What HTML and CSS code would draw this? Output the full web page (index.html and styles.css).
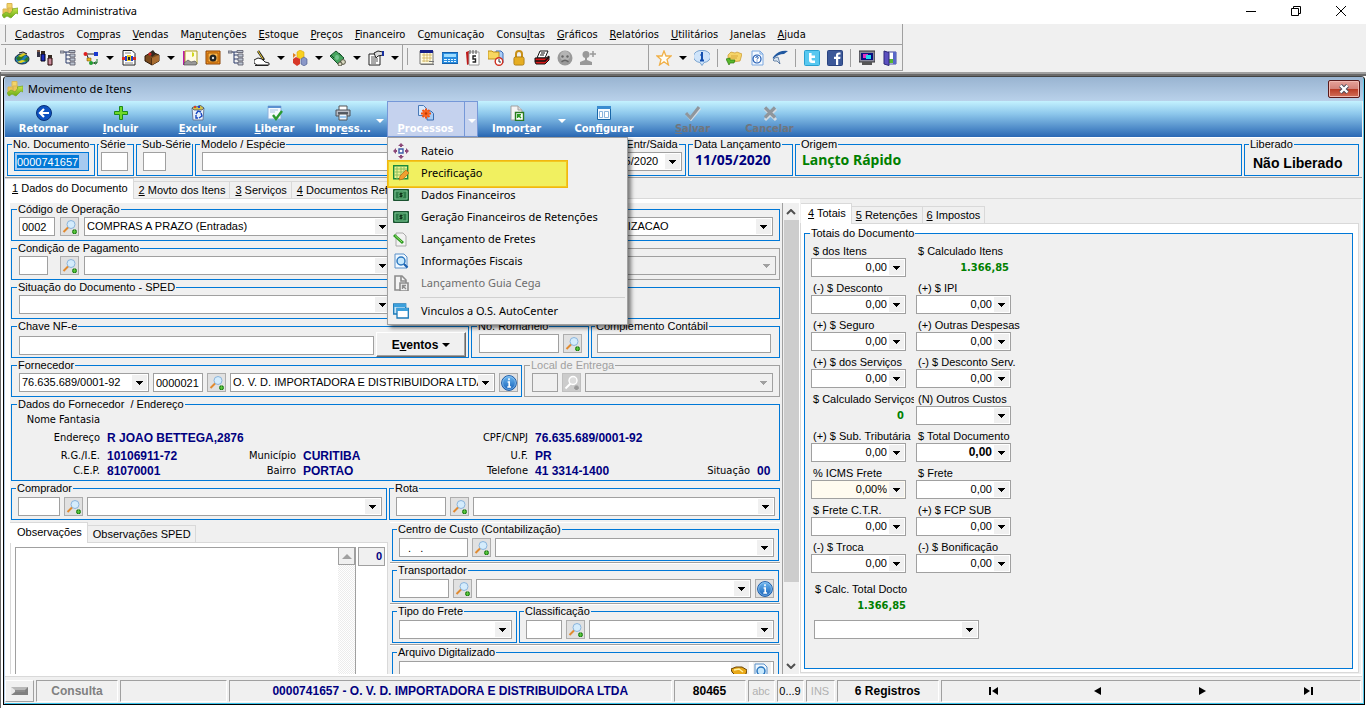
FILE: index.html
```html
<!DOCTYPE html>
<html lang="pt-BR">
<head>
<meta charset="utf-8">
<title>Gestão Administrativa</title>
<link rel="stylesheet" href="styles.css">
</head>
<body>
<svg class="defs" aria-hidden="true">
  <defs>
    <linearGradient id="lgBlue" x1="0" y1="0" x2="0" y2="1"><stop offset="0" stop-color="#6db8f0"/><stop offset="1" stop-color="#1560b8"/></linearGradient>
    <linearGradient id="lgGreen" x1="0" y1="0" x2="0" y2="1"><stop offset="0" stop-color="#c8e84a"/><stop offset="1" stop-color="#6aaa14"/></linearGradient>
  </defs>
  <symbol id="app" viewBox="0 0 16 16"><path d="M5 .5h5v5H5z" fill="#f3d469" stroke="#d9b654"/><path d="M1 6h5v5H1zM6 5h5v6H6z" fill="#ecc557" stroke="#d9b654"/><path d="M0 12l4-3 4 2 3-4-1-1 6-1v6l-2-1-5 5-4-2-3 2z" fill="url(#lgGreen)" stroke="#7aaa2a" stroke-width=".8"/></symbol>
  <symbol id="globe" viewBox="0 0 16 16"><ellipse cx="8" cy="9" rx="7" ry="5" fill="#1c7ac0" stroke="#123"/><path d="M2 8l5-4 4 1-3 4-4 2zM9 11l4-4 2 1-2 4z" fill="#2c7a28"/><path d="M4 6l6-3 3 1-6 3z" fill="#d8c820"/><path d="M3 12l5-2 4 1-5 2z" fill="#e8d820"/><path d="M5 3l4-1 4 2" fill="none" stroke="#111"/></symbol>
  <symbol id="people" viewBox="0 0 16 16"><path d="M0 1h3v6H0z" fill="#334"/><path d="M0 0h3v2H0z" fill="#754"/><path d="M4 4h4v7H4z" fill="#1c2cc0" stroke="#001"/><path d="M4 1h4v3H4z" fill="#332820"/><path d="M11 8h4v7h-4z" fill="#c88c9c" stroke="#200"/><path d="M11 5h4v3h-4z" fill="#332820"/></symbol>
  <symbol id="tree" viewBox="0 0 16 16"><path d="M3 2h6M6 2v11M6 5h4M6 9h4M6 13h4" fill="none" stroke="#2a3a6a"/><path d="M0 1h4v2H0zM9 .5h6v2H9zM10 4h5v3h-5zM10 8h5v3h-5zM10 12h5v3h-5z" fill="#bcc4d0" stroke="#556" stroke-width=".8"/></symbol>
  <symbol id="flow" viewBox="0 0 16 16"><path d="M3 4h10M4 5l2 5M9 13h5" stroke="#222" fill="none"/><circle cx="2.500" cy="4" r="2" fill="#e02020"/><path d="M11 2h4v4h-4z" fill="#1838d0"/><path d="M4 8h4v3H4z" fill="#e8b820" stroke="#640" stroke-width=".5"/><circle cx="8" cy="13" r="2" fill="#20a030"/><path d="M14 9v4h-3M12.500 11.500L11 13l1.500 1.500" fill="none" stroke="#187828"/></symbol>
  <symbol id="docperson" viewBox="0 0 16 16"><path d="M2 .5h9l3 3V15H2z" fill="#fff" stroke="#222"/><path d="M4 3h6M4 13h8" stroke="#888"/><path d="M1 7h3v3H1zM12 7h3v3h-3z" fill="#e03020"/><path d="M4 6h8v5H4z" fill="#2040d0"/><path d="M6 5h4v6H6z" fill="#f0d020"/><path d="M7 7h2v3H7z" fill="#222"/></symbol>
  <symbol id="box" viewBox="0 0 16 16"><path d="M1 6l7-4 7 3v6l-7 4-7-4z" fill="#7a4a1c" stroke="#2a1606"/><path d="M8 8v7" stroke="#2a1606"/><path d="M8 8l7-3v6l-7 4z" fill="#a86c30"/><path d="M5 3l4-3 3 4-4 3z" fill="#332a20"/><circle cx="6" cy="4" r="1.600" fill="#d02020"/></symbol>
  <symbol id="scroll" viewBox="0 0 16 16"><path d="M1 1h3v14H1z" fill="#c018b0"/><path d="M3 1h12v13H3z" fill="#fffbe4" stroke="#b0a020"/><path d="M2 13l4-3 3 2 4-1 2 2-1 2H2z" fill="#999" stroke="#444" stroke-width=".6"/><path d="M10 2l2 1v3l-2 1z" fill="#d0d820"/></symbol>
  <symbol id="safe" viewBox="0 0 16 16"><path d="M1 1h14v13H1z" fill="#f0901c" stroke="#8a4204"/><path d="M3 3h10v9H3z" fill="#ffb84c" stroke="#a85a08"/><circle cx="8" cy="8" r="3.500" fill="#222"/><circle cx="8" cy="8" r="1.200" fill="#ddd"/></symbol>
  <symbol id="hand" viewBox="0 0 16 16"><path d="M0 10l4-2 4 1 3 3 4 1v2H3l-3-2z" fill="#fff" stroke="#222"/><path d="M4 1l6 9" stroke="#222" stroke-width="2.400"/><path d="M4 1l5 8" stroke="#f0d030"/><path d="M1 15.500h13" stroke="#222"/></symbol>
  <symbol id="shapes" viewBox="0 0 16 16"><path d="M8 0l4 2v5L8 9 5 7V2z" fill="#f8d020" stroke="#d8a408" stroke-width=".6"/><path d="M1 9l3-2 4 2v5l-3 2-4-3z" fill="#d83828"/><path d="M9 9l3-2 3 2v5l-3 2-3-2z" fill="#8a98c8" stroke="#405088" stroke-width=".6"/><path d="M1 3l3 2-3 3z" fill="#e08020"/></symbol>
  <symbol id="money" viewBox="0 0 16 16"><path d="M0 6l6-5 8 7-6 6z" fill="#46a45e" stroke="#14502a"/><ellipse cx="7" cy="7.500" rx="2" ry="2.400" fill="#74c48e"/><path d="M1 5l3 3M9 3l3 3" stroke="#14502a"/><circle cx="13" cy="12" r="2.400" fill="#d8d8c0" stroke="#554"/><circle cx="10" cy="14" r="2" fill="#d8d8c0" stroke="#554"/></symbol>
  <symbol id="form" viewBox="0 0 16 16"><path d="M1 4h11v11H1z" fill="#fff" stroke="#222"/><path d="M3 7h4M3 9h7M3 11h7M3 13h5" stroke="#555"/><path d="M6 3l4-2 5 1v3l-5 1-2 2z" fill="#ddd" stroke="#222"/><path d="M14 1h2v5h-2z" fill="#1830a0"/></symbol>
  <symbol id="calendar" viewBox="0 0 16 16"><path d="M1 1h13v13H1z" fill="#fffce4" stroke="#777"/><path d="M1 0h13v3H1z" fill="#16208a"/><path d="M3 5h10M3 8h10M3 11h7M5 3v9M8 3v9M11 3v9" stroke="#c8a848" stroke-width=".7"/><path d="M10 11h5v1h-5zM2 14h13v1H2z" fill="#777"/></symbol>
  <symbol id="calc" viewBox="0 0 16 16"><path d="M0 2.500h16v11H0z" fill="#2a8ee0" stroke="#1460ac"/><path d="M2 4h12v3H2z" fill="#9edcff"/><path d="M2 9h3v1H2zM6 9h2v1H6zM9 9h2v1H9zM12 9h2v1h-2zM2 11h3v1H2zM6 11h2v1H6zM9 11h2v1H9zM12 11h2v1h-2z" fill="#e8f6ff"/></symbol>
  <symbol id="notebook" viewBox="0 0 16 16"><path d="M1 2l3-1v13l-2 1z" fill="#c01818"/><path d="M4 2h10v13H4z" fill="#fff" stroke="#999"/><path d="M5 0v4M8 0v4M11 0v4" stroke="#555"/><path d="M11 6H8v3h2.500v3H7.500" fill="none" stroke="#222" stroke-width="1.400"/></symbol>
  <symbol id="foldclock" viewBox="0 0 16 16"><path d="M8 1h5l2 2v10H8z" fill="#aacdf8" stroke="#3a6cb8"/><path d="M0 1h4l1 1h6v7H0z" fill="#f8d860" stroke="#c09018"/><circle cx="11" cy="11.500" r="3.800" fill="#fff" stroke="#d03020" stroke-width="1.400"/><path d="M11 9v3h2" fill="none" stroke="#333"/></symbol>
  <symbol id="lock" viewBox="0 0 16 16"><path d="M5 8V4a3 3 0 016 0v4" fill="none" stroke="#c89018" stroke-width="2"/><rect x="3" y="7" width="10" height="8" rx="1.500" fill="#f4c030" stroke="#a87408"/><path d="M4 9h8M4 11h8M4 13h8" stroke="#d89a14"/></symbol>
  <symbol id="stamp" viewBox="0 0 16 16"><path d="M6 1h8l-3 7H3z" fill="#fff" stroke="#111"/><path d="M7 3h4M6 5h4" stroke="#111"/><path d="M1 8h11l3-2v4l-4 4H2l-1-2z" fill="#d81818" stroke="#111"/><path d="M1 11h10l4-4" fill="none" stroke="#111" stroke-width="1.500"/></symbol>
  <symbol id="sad" viewBox="0 0 16 16"><circle cx="8" cy="8" r="7.500" fill="#9a9a9a"/><circle cx="8" cy="6" r="5" fill="#b4b4b4"/><path d="M4.500 12q3.500-3.500 7 0" fill="none" stroke="#666" stroke-width="1.300"/><circle cx="5.500" cy="6.500" r="1.200" fill="#666"/><circle cx="10.500" cy="6.500" r="1.200" fill="#666"/></symbol>
  <symbol id="useradd" viewBox="0 0 16 16"><circle cx="6" cy="4.500" r="3.500" fill="#999"/><path d="M5 7h2v3l5 2v3H0v-3l5-2z" fill="#999"/><path d="M13 1v6M10 4h6" stroke="#999" stroke-width="1.500"/></symbol>
  <symbol id="star" viewBox="0 0 16 16"><path d="M8 1l2 5h5l-4 3.500L12.500 15 8 11.800 3.500 15 5 9.500 1 6h5z" fill="#fffdf4" stroke="#f0b048" stroke-width="1.300"/></symbol>
  <symbol id="infoball" viewBox="0 0 16 16"><path d="M8 .5a7.500 6 0 012 12L8 15.500l-2-3A7.500 6 0 018 .500z" fill="#cfe4fa" stroke="#7aa4d0"/><path d="M8 2v2M6.500 5H8v5M6 10.500h4" fill="none" stroke="#1450b0" stroke-width="2"/></symbol>
  <symbol id="cards" viewBox="0 0 16 16"><path d="M2 5l3-3 4 1 2-1 5 2-2 7-8 1-4-3z" fill="#f6d468" stroke="#c8962c" stroke-width=".7"/><path d="M5 6h7M4 8h7" stroke="#d8a83c"/><path d="M0 9l4-1v2h5l-1 3H4l-1 2z" fill="#58b82c" stroke="#2c7a10" stroke-width=".7"/></symbol>
  <symbol id="dochelp" viewBox="0 0 16 16"><path d="M3 1h8l3 3v11H3z" fill="#f2f8ff" stroke="#7aa8e0"/><path d="M11 1v3h3" fill="none" stroke="#7aa8e0"/><circle cx="8" cy="9" r="4" fill="#fff" stroke="#1c58b0" stroke-width="1.200"/><path d="M6.800 8q0-1.500 1.300-1.500T9.200 8L8 9.500M8 10.500v1" fill="none" stroke="#1c58b0"/></symbol>
  <symbol id="bird" viewBox="0 0 16 16"><path d="M16 1Q7 0 2 6q-2 2-1 3 5-5 11-5z" fill="#2058a0"/><path d="M1 10q2-3 5-3l2 7-3-3-3 0z" fill="#d8e4f0" stroke="#4a6c98" stroke-width=".8"/></symbol>
  <symbol id="tw" viewBox="0 0 16 16"><rect x=".5" y=".5" width="15" height="15" rx="1" fill="#58c8f0" stroke="#28a0d0"/><path d="M5 3v7q0 3 3 3h3v-2.400H8.600Q7.600 10.600 7.600 9V8H11V5.600H7.600V3z" fill="#fff"/></symbol>
  <symbol id="fb" viewBox="0 0 16 16"><rect x=".5" y=".5" width="15" height="15" rx="1" fill="#3c5898" stroke="#2a4480"/><path d="M9 15V9H7V6.800h2V5q0-2.600 3-2.600h1.500v2.200H12Q11.200 4.600 11.200 5.600v1.200h2.300L13.200 9h-2v6z" fill="#fff"/></symbol>
  <symbol id="monitor" viewBox="0 0 16 16"><path d="M0 1h16v11H0z" fill="#8a8a9a" stroke="#333"/><path d="M2 3h12v7H2z" fill="#0a1080"/><path d="M4 4h5v4H4z" fill="#e030c0"/><path d="M7 5h5v4H7z" fill="#20d8f0"/><path d="M3 12h10v3H3z" fill="#555"/></symbol>
  <symbol id="door" viewBox="0 0 16 16"><path d="M6 2h8v12H6z" fill="#fff" stroke="#4048a0"/><path d="M7 9h6v4H7z" fill="#58b830"/><path d="M11 2h3v12h-3z" fill="#5868c8"/><path d="M2 1l5 1.500v13L2 14z" fill="#5c50c0" stroke="#2c2878"/></symbol>
  <symbol id="back" viewBox="0 0 16 16"><circle cx="8" cy="8" r="7.500" fill="#0c50c0" stroke="#083078"/><path d="M8 4L4 8l4 4M4.500 8H13" fill="none" stroke="#fff" stroke-width="2.200"/></symbol>
  <symbol id="plus" viewBox="0 0 16 16"><path d="M6.500 1.500h3v5h5v3h-5v5h-3v-5h-5v-3h5z" fill="#70d828" stroke="#1c8a1c"/></symbol>
  <symbol id="trash" viewBox="0 0 16 16"><path d="M2 3h12l-1 12H3z" fill="#e8f0fa" stroke="#6a7a98"/><path d="M2 3l3-2 2 1 3-2 4 3-2 2H4z" fill="#d0c050" stroke="#346" stroke-width=".7"/><path d="M4 1h2v2H4z" fill="#e04020"/><path d="M8 1h2v2H8z" fill="#2040d0"/><path d="M6 9l2-3 3 1M11 8l1 3-3 2M8 13H6V10" fill="none" stroke="#1848c0" stroke-width="1.400"/></symbol>
  <symbol id="docok" viewBox="0 0 16 16"><path d="M1 1h13v13H1z" fill="#f4f9ff" stroke="#8ab0dc"/><path d="M1 1h13v2H1z" fill="#5a90d0"/><path d="M3 5h8M3 7h5" stroke="#a8c4e4"/><path d="M6 10l3 4 6-8" fill="none" stroke="#2a9a30" stroke-width="2.400"/></symbol>
  <symbol id="printer" viewBox="0 0 16 16"><path d="M4 1h8v5H4z" fill="#fff" stroke="#555"/><path d="M1 5h14v6H1z" fill="#b8bcc4" stroke="#4c5058"/><path d="M3 7h10v2H3z" fill="#555b66"/><path d="M4 9h8v6H4z" fill="#eef6ff" stroke="#555"/><path d="M5 12h6" stroke="#4a9ae0"/></symbol>
  <symbol id="process" viewBox="0 0 16 16"><path d="M.5.500h5l3 3v7h-8z" fill="#d8e8fc" stroke="#4a7ab8"/><path d="M9 6h4l2.500 2.500V15H9z" fill="#a8ccf4" stroke="#3a6cb0"/><path d="M8 3.500v10M3 8.500h10M4.500 5l7 7M11.500 5l-7 7" stroke="#f05010" stroke-width="2"/><circle cx="8" cy="8.500" r="3.400" fill="#f86420"/><circle cx="8" cy="8.500" r="1.200" fill="#c03800"/></symbol>
  <symbol id="import" viewBox="0 0 16 16"><path d="M2 1h7l4 4v10H2z" fill="#f4f4f4" stroke="#a0a0a0"/><path d="M9 1v4h4" fill="#ddd" stroke="#a0a0a0"/><path d="M6.500 7.500h8v8h-8z" fill="#fff" stroke="#2c7a20" stroke-width="1.400"/><path d="M12 13L9 10M8.600 13V9.700H12" fill="none" stroke="#2c9a20" stroke-width="1.500"/></symbol>
  <symbol id="config" viewBox="0 0 16 16"><path d="M1.500 1.500h13v13h-13z" fill="#f4faff" stroke="#1866a8"/><path d="M1 1h14v3H1z" fill="#3a8cd0"/><path d="M3.500 6.500h3v6h-3zM8.500 6.500h4v6h-4z" fill="#fff" stroke="#8ab4dc"/></symbol>
  <symbol id="check" viewBox="0 0 16 16"><path d="M2 9l4 5L15 3" fill="none" stroke="#d4dce4" stroke-width="3" /><path d="M1 8l4.500 5L14 2" fill="none" stroke="#8f969c" stroke-width="3"/></symbol>
  <symbol id="cross" viewBox="0 0 16 16"><path d="M3 4l11 11M14 4L3 15" fill="none" stroke="#d4dce4" stroke-width="3"/><path d="M3 2.500l10 10M13 2.500l-10 10" fill="none" stroke="#8f969c" stroke-width="3.200"/></symbol>
  <symbol id="find" viewBox="0 0 16 16"><circle cx="9" cy="5.500" r="4" fill="#d4ecfc" stroke="#8ab4dc"/><path d="M6 8.500L1.500 13" stroke="#e08a30" stroke-width="2"/><path d="M12.500 10.500v4.600M10.200 12.800h4.600" stroke="#1c7a14" stroke-width="3"/><path d="M12.500 11v3.600M10.700 12.800h3.600" stroke="#5ac83c" stroke-width="1.200"/></symbol>
  <symbol id="findoff" viewBox="0 0 16 16"><circle cx="9" cy="5.500" r="4" fill="#ddd" stroke="#fff" stroke-width="1.400"/><path d="M6.500 8.500L1.500 13.500" stroke="#fff" stroke-width="2"/><path d="M12.500 10.500v4.600M10.200 12.800h4.600" stroke="#999" stroke-width="2.500"/></symbol>
  <symbol id="info" viewBox="0 0 16 16"><circle cx="8" cy="8" r="7.400" fill="url(#lgBlue)" stroke="#1c5ca8"/><circle cx="8" cy="8" r="6.400" fill="none" stroke="#a8d4f8" stroke-width=".6"/><path d="M8 3.200v2M6.600 7H8.200v5M6.300 12h3.800" fill="none" stroke="#fff" stroke-width="1.600"/></symbol>
  <symbol id="rateio" viewBox="0 0 16 16"><path d="M6 6h4v4H6z" fill="#fff" stroke="#3c5ca8" stroke-width="1.400"/><path d="M8 0l3 3H9v1H7V3H5zM8 16l3-3H9v-1H7v1H5zM0 8l3-3v2h1v2H3v2zM16 8l-3-3v2h-1v2h1v2z" fill="#8c4878"/></symbol>
  <symbol id="gridpen" viewBox="0 0 16 16"><path d="M.7.700h14v13H.7z" fill="#f0f290" stroke="#1c8a3c" stroke-width="1.400"/><path d="M1 4h13M1 7h13M1 10h13M4 1v13M8 1v13M11 1v13" stroke="#8cc05c"/><path d="M6 15l1-4 6-6 3 3-6 6z" fill="#f0a030" stroke="#b86a10" stroke-width=".7"/></symbol>
  <symbol id="bill" viewBox="0 0 16 16"><path d="M.5 2.500h15v11H.5z" fill="#2c7a48" stroke="#1a5230"/><path d="M2 4h12v8H2z" fill="none" stroke="#7cc494"/><ellipse cx="8" cy="8" rx="3" ry="3.400" fill="#4c9c64"/><path d="M9.500 6.500H7v1.500h2v1.500H6.500M8 5.500v5" fill="none" stroke="#0c3018"/></symbol>
  <symbol id="docpen" viewBox="0 0 16 16"><path d="M3 2h7l3 3v10H3z" fill="#f2f2f2" stroke="#aaa"/><path d="M1 4l9 8" stroke="#2c9a20" stroke-width="3"/><path d="M2 4.500l7 6.500" stroke="#98e070"/></symbol>
  <symbol id="docfind" viewBox="0 0 16 16"><path d="M2 1h9l3 3v11H2z" fill="#f0f8ff" stroke="#5a90c8"/><circle cx="8" cy="8" r="4" fill="#c8e8fc" stroke="#2c78c0" stroke-width="1.500"/><path d="M11 11l3.500 3.500" stroke="#1c60b0" stroke-width="2.200"/></symbol>
  <symbol id="importoff" viewBox="0 0 16 16"><path d="M2 1h7l4 4v10H2z" fill="#f4f4f4" stroke="#8c8c8c" stroke-width="1.600"/><path d="M8 1v5h5" fill="none" stroke="#8c8c8c" stroke-width="1.600"/><path d="M7 8h8v8H7z" fill="#eee" stroke="#8c8c8c" stroke-width="1.600"/><path d="M13 14l-3-3M9.500 14v-3.500H13" fill="none" stroke="#8c8c8c" stroke-width="1.300"/></symbol>
  <symbol id="windows" viewBox="0 0 16 16"><path d="M.7 1h12v10H.7z" fill="#c4e6fa" stroke="#1c7ab8" stroke-width="1.300"/><path d="M1 1h12v3H1z" fill="#3ca0dc"/><path d="M4 5.500h11.300v9.500H4z" fill="#fff" stroke="#1c7ab8" stroke-width="1.300"/><path d="M4 5h11v3H4z" fill="#3ca0dc"/></symbol>
  <symbol id="handshake" viewBox="0 0 16 16"><path d="M0 6l5-2 6 0 5 3-1 4-5 3-6-2-3-3z" fill="#e8a818" stroke="#6a4404"/><path d="M3 7l5-1 4 3" fill="none" stroke="#fff0a0" stroke-width="1.400"/></symbol>
  <symbol id="key" viewBox="0 0 18 10"><path d="M0 1h17v8H0z" fill="#808080"/><path d="M0 1h17l-3 3H4L0 9z" fill="#b8b8b8"/><path d="M0 1l4 3v2L0 9z" fill="#e8e8e8"/><path d="M4 4h10v2H4z" fill="#8c8c8c"/></symbol>
</svg>

<div class="app">
  <header class="titlebar">
    <svg class="i"><use href="#app"/></svg>
    <h1>Gestão Administrativa</h1>
    <button class="win" aria-label="Minimizar"><svg viewBox="0 0 10 10"><path d="M0 5.500h10"/></svg></button>
    <button class="win" aria-label="Restaurar"><svg viewBox="0 0 10 10"><path d="M.5 2.500h7v7h-7zM2.500 2.500v-2h7v7h-2"/></svg></button>
    <button class="win" aria-label="Fechar"><svg viewBox="0 0 10 10"><path d="M0 0l10 10M10 0L0 10"/></svg></button>
  </header>

  <div class="bars">
    <div class="dock">
      <nav class="menubar">
        <a href="#"><u>C</u>adastros</a><a href="#">Co<u>m</u>pras</a><a href="#"><u>V</u>endas</a><a href="#">Ma<u>n</u>utenções</a><a href="#"><u>E</u>stoque</a><a href="#"><u>P</u>reços</a><a href="#"><u>F</u>inanceiro</a><a href="#">C<u>o</u>municação</a><a href="#">Consu<u>l</u>tas</a><a href="#"><u>G</u>ráficos</a><a href="#"><u>R</u>elatórios</a><a href="#"><u>U</u>tilitários</a><a href="#"><u>J</u>anelas</a><a href="#"><u>A</u>juda</a>
      </nav>
      <div class="toolbars">
        <div class="tools t1">
          <button aria-label="Filiais"><svg class="i"><use href="#globe"/></svg></button>
          <button aria-label="Pessoas"><svg class="i"><use href="#people"/></svg></button>
          <button aria-label="Estrutura"><svg class="i"><use href="#tree"/></svg></button>
          <button aria-label="Operações"><svg class="i"><use href="#flow"/></svg></button>
          <button class="dd" aria-label="Mais operações"></button>
          <button aria-label="Funcionários"><svg class="i"><use href="#docperson"/></svg></button>
          <button aria-label="Produtos"><svg class="i"><use href="#box"/></svg></button>
          <button class="dd" aria-label="Mais produtos"></button>
          <button aria-label="Documentos"><svg class="i"><use href="#scroll"/></svg></button>
          <button aria-label="Cofre"><svg class="i"><use href="#safe"/></svg></button>
          <button aria-label="Plano de contas"><svg class="i"><use href="#tree"/></svg></button>
          <button class="spaced" aria-label="Pedidos"><svg class="i"><use href="#hand"/></svg></button>
          <button class="dd" aria-label="Mais pedidos"></button>
          <button aria-label="Estoque"><svg class="i"><use href="#shapes"/></svg></button>
          <button class="dd" aria-label="Mais estoque"></button>
          <button aria-label="Financeiro"><svg class="i"><use href="#money"/></svg></button>
          <button class="dd" aria-label="Mais financeiro"></button>
          <button aria-label="Notas"><svg class="i"><use href="#form"/></svg></button>
          <button class="dd" aria-label="Mais notas"></button>
        </div>
        <div class="tools t2">
          <button aria-label="Calendário"><svg class="i"><use href="#calendar"/></svg></button>
          <button aria-label="Calculadora"><svg class="i"><use href="#calc"/></svg></button>
          <button aria-label="Agenda"><svg class="i"><use href="#notebook"/></svg></button>
          <button aria-label="Histórico"><svg class="i"><use href="#foldclock"/></svg></button>
          <button aria-label="Bloquear"><svg class="i"><use href="#lock"/></svg></button>
          <button aria-label="Carimbo"><svg class="i"><use href="#stamp"/></svg></button>
          <button disabled aria-label="Avaliação"><svg class="i"><use href="#sad"/></svg></button>
          <button disabled aria-label="Novo usuário"><svg class="i"><use href="#useradd"/></svg></button>
        </div>
        <div class="tools t3">
          <button aria-label="Favoritos"><svg class="i"><use href="#star"/></svg></button>
          <button class="dd" aria-label="Mais favoritos"></button>
          <button aria-label="Informações"><svg class="i"><use href="#infoball"/></svg></button>
          <i class="sep"></i>
          <button aria-label="Mensagens"><svg class="i"><use href="#cards"/></svg></button>
          <button aria-label="Ajuda"><svg class="i"><use href="#dochelp"/></svg></button>
          <button aria-label="Site"><svg class="i"><use href="#bird"/></svg></button>
          <i class="sep"></i>
          <button aria-label="Twitter"><svg class="i"><use href="#tw"/></svg></button>
          <button aria-label="Facebook"><svg class="i"><use href="#fb"/></svg></button>
          <i class="sep"></i>
          <button aria-label="Tela"><svg class="i"><use href="#monitor"/></svg></button>
          <button aria-label="Sair"><svg class="i"><use href="#door"/></svg></button>
        </div>
      </div>
    </div>
  </div>

  <main class="mdi">
    <section class="window">
      <header class="wtitle">
        <svg class="i"><use href="#app"/></svg>
        <h2>Movimento de Itens</h2>
        <button class="close" aria-label="Fechar"><svg viewBox="0 0 12 10"><path d="M2.500 1.500l7 7M9.500 1.500l-7 7" stroke="#444c5c" stroke-width="4"/><path d="M2.500 1.500l7 7M9.500 1.500l-7 7" stroke="#fff" stroke-width="2.400"/></svg></button>
      </header>

      <div class="actions">
        <button class="act"><svg class="i"><use href="#back"/></svg><span>Retornar</span></button>
        <button class="act"><svg class="i"><use href="#plus"/></svg><span><u>I</u>ncluir</span></button>
        <button class="act"><svg class="i"><use href="#trash"/></svg><span><u>E</u>xcluir</span></button>
        <button class="act"><svg class="i"><use href="#docok"/></svg><span><u>L</u>iberar</span></button>
        <button class="act narrow"><svg class="i"><use href="#printer"/></svg><span>Impr<u>e</u>ss...</span></button>
        <button class="more" aria-label="Opções de impressão"></button>
        <div class="open">
          <button class="act"><svg class="i"><use href="#process"/></svg><span><u>P</u>rocessos</span></button>
          <button class="more" aria-label="Opções de processos"></button>
          <div class="menu" role="menu">
            <button role="menuitem"><svg class="i"><use href="#rateio"/></svg>Rateio</button>
            <button role="menuitem" class="hot"><svg class="i"><use href="#gridpen"/></svg>Precificação</button>
            <button role="menuitem"><svg class="i"><use href="#bill"/></svg>Dados Financeiros</button>
            <button role="menuitem"><svg class="i"><use href="#bill"/></svg>Geração Financeiros de Retenções</button>
            <button role="menuitem"><svg class="i"><use href="#docpen"/></svg>Lançamento de Fretes</button>
            <button role="menuitem"><svg class="i"><use href="#docfind"/></svg>Informações Fiscais</button>
            <button role="menuitem" disabled><svg class="i"><use href="#importoff"/></svg>Lançamento Guia Cega</button>
            <hr>
            <button role="menuitem"><svg class="i"><use href="#windows"/></svg>Vinculos a O.S. AutoCenter</button>
          </div>
        </div>
        <button class="act"><svg class="i"><use href="#import"/></svg><span>Impor<u>t</u>ar</span></button>
        <button class="more" aria-label="Opções de importação"></button>
        <button class="act mid"><svg class="i"><use href="#config"/></svg><span>Con<u>f</u>igurar</span></button>
        <button class="act apart" disabled><svg class="i"><use href="#check"/></svg><span><u>S</u>alvar</span></button>
        <button class="act" disabled><svg class="i"><use href="#cross"/></svg><span>Cancelar</span></button>
      </div>

      <div class="head">
        <fieldset class="g w88"><legend>No. Documento</legend><input class="doc" aria-label="No. Documento" value="0000741657"></fieldset>
        <fieldset class="g w37"><legend>Série</legend><input aria-label="Série"></fieldset>
        <fieldset class="g w57"><legend>Sub-Série</legend><input class="w23" aria-label="Sub-Série"></fieldset>
        <fieldset class="g model"><legend>Modelo / Espécie</legend><input aria-label="Modelo / Espécie"></fieldset>
        <fieldset class="g w92"><legend>Data Entr/Saida</legend><select aria-label="Data Entr/Saida"><option>11/05/2020</option></select></fieldset>
        <fieldset class="g w105"><legend>Data Lançamento</legend><output class="big navy">11/05/2020</output></fieldset>
        <fieldset class="g grow"><legend>Origem</legend><output class="big green">Lançto Rápido</output></fieldset>
        <fieldset class="g w114"><legend>Liberado</legend><output class="big arial">Não Liberado</output></fieldset>
      </div>

      <div class="tabs" role="tablist">
        <button role="tab" aria-selected="true"><u>1</u> Dados do Documento</button>
        <button role="tab"><u>2</u> Movto dos Itens</button>
        <button role="tab"><u>3</u> Serviços</button>
        <button role="tab"><u>4</u> Documentos Ref</button>
      </div>

      <div class="page">
        <div class="form">
          <div class="row">
            <fieldset class="g w382"><legend>Código de Operação</legend>
              <input class="w36" aria-label="Código" value="0002"><button class="find" aria-label="Pesquisar"><svg class="i"><use href="#find"/></svg></button><select class="grow" aria-label="Operação"><option>COMPRAS A PRAZO (Entradas)</option></select></fieldset>
            <fieldset class="g grow wide"><legend></legend><input class="w36" aria-label="Código"><button class="find" aria-label="Pesquisar"><svg class="i"><use href="#find"/></svg></button><select class="grow" aria-label="Finalidade"><option>COMPRAS PARA COMERCIALIZACAO</option></select></fieldset>
          </div>
          <div class="row">
            <fieldset class="g w382"><legend>Condição de Pagamento</legend>
              <input class="w29" aria-label="Código da condição"><button class="find" aria-label="Pesquisar"><svg class="i"><use href="#find"/></svg></button><select class="grow" aria-label="Condição de Pagamento"><option></option></select></fieldset>
            <fieldset class="g grow off slim"><legend></legend><select class="grow" disabled aria-label="Plano"><option></option></select></fieldset>
          </div>
          <div class="row">
            <fieldset class="g grow"><legend>Situação do Documento - SPED</legend><select class="w370" aria-label="Situação do Documento"><option></option></select></fieldset>
          </div>
          <div class="row">
            <fieldset class="g w457 key"><legend>Chave NF-e</legend><input class="grow" aria-label="Chave NF-e"><button class="push">E<u>v</u>entos</button></fieldset>
            <fieldset class="g w118"><legend>No. Romaneio</legend><input class="w80" aria-label="No. Romaneio"><button class="find" aria-label="Pesquisar"><svg class="i"><use href="#find"/></svg></button></fieldset>
            <fieldset class="g grow tight"><legend>Complemento Contábil</legend><input class="w174" aria-label="Complemento Contábil"></fieldset>
          </div>
          <div class="row">
            <fieldset class="g w511"><legend>Fornecedor</legend>
              <select class="w130" aria-label="CNPJ"><option>76.635.689/0001-92</option></select><input class="w50" aria-label="Código" value="0000021"><button class="find" aria-label="Pesquisar"><svg class="i"><use href="#find"/></svg></button><select class="grow" aria-label="Fornecedor"><option>O. V. D. IMPORTADORA E DISTRIBUIDORA LTDA</option></select><button class="find" aria-label="Detalhes"><svg class="i"><use href="#info"/></svg></button></fieldset>
            <fieldset class="g grow off"><legend>Local de Entrega</legend><input class="w26" disabled aria-label="Código"><button class="find" disabled aria-label="Pesquisar"><svg class="i"><use href="#findoff"/></svg></button><select class="grow" disabled aria-label="Local de Entrega"><option></option></select></fieldset>
          </div>
          <fieldset class="g data"><legend>Dados do Fornecedor&nbsp; / Endereço</legend>
            <dl>
              <dt>Nome Fantasia</dt><dd class="rest"></dd>
              <dt>Endereço</dt><dd class="span3">R JOAO BETTEGA,2876</dd><dt>CPF/CNPJ</dt><dd class="span3">76.635.689/0001-92</dd>
              <dt>R.G./I.E.</dt><dd>10106911-72</dd><dt>Município</dt><dd>CURITIBA</dd><dt>U.F.</dt><dd class="span3">PR</dd>
              <dt>C.E.P.</dt><dd>81070001</dd><dt>Bairro</dt><dd>PORTAO</dd><dt>Telefone</dt><dd>41 3314-1400</dd><dt>Situação</dt><dd>00</dd>
            </dl>
          </fieldset>
          <div class="row">
            <fieldset class="g w376 low"><legend>Comprador</legend><input class="w42" aria-label="Código"><button class="find" aria-label="Pesquisar"><svg class="i"><use href="#find"/></svg></button><select class="grow" aria-label="Comprador"><option></option></select></fieldset>
            <fieldset class="g grow low"><legend>Rota</legend><input class="w50" aria-label="Código"><button class="find" aria-label="Pesquisar"><svg class="i"><use href="#find"/></svg></button><select class="grow" aria-label="Rota"><option></option></select></fieldset>
          </div>
          <div class="lower">
            <div class="notes">
              <div class="tabs" role="tablist"><button role="tab" aria-selected="true">Observações</button><button role="tab">Observações SPED</button></div>
              <div class="notebody">
                <textarea aria-label="Observações"></textarea>
                <div class="oldbar"><button aria-label="Rolar para cima"></button></div>
                <output class="count">0</output>
              </div>
            </div>
            <div class="extras">
              <div class="panel"><fieldset class="g grow low"><legend>Centro de Custo (Contabilização)</legend><input class="w69" aria-label="Código" value="&nbsp; .&nbsp;&nbsp; ."><button class="find" aria-label="Pesquisar"><svg class="i"><use href="#find"/></svg></button><select class="grow" aria-label="Centro de Custo"><option></option></select></fieldset></div>
              <div class="panel"><fieldset class="g grow low"><legend>Transportador</legend><input class="w50" aria-label="Código"><button class="find" aria-label="Pesquisar"><svg class="i"><use href="#find"/></svg></button><select class="grow" aria-label="Transportador"><option></option></select><button class="find" aria-label="Detalhes"><svg class="i"><use href="#info"/></svg></button></fieldset></div>
              <div class="panel"><fieldset class="g w125 low"><legend>Tipo do Frete</legend><select class="grow" aria-label="Tipo do Frete"><option></option></select></fieldset>
                <fieldset class="g grow low"><legend>Classificação</legend><input class="w36" aria-label="Código"><button class="find" aria-label="Pesquisar"><svg class="i"><use href="#find"/></svg></button><select class="grow" aria-label="Classificação"><option></option></select></fieldset></div>
              <div class="panel"><fieldset class="g grow low"><legend>Arquivo Digitalizado</legend><div class="file"><input aria-label="Arquivo Digitalizado"><button aria-label="Anexar"><svg class="i"><use href="#handshake"/></svg></button><button aria-label="Visualizar"><svg class="i"><use href="#docfind"/></svg></button></div></fieldset></div>
            </div>
          </div>
        </div>

        <div class="scroll">
          <button aria-label="Rolar para cima"><svg viewBox="0 0 10 6"><path d="M1 5l4-4 4 4"/></svg></button>
          <div class="thumb"></div>
          <button aria-label="Rolar para baixo"><svg viewBox="0 0 10 6"><path d="M1 1l4 4 4-4"/></svg></button>
        </div>

        <div class="side">
          <div class="tabs" role="tablist">
            <button role="tab" aria-selected="true"><u>4</u> Totais</button><button role="tab"><u>5</u> Retenções</button><button role="tab"><u>6</u> Impostos</button>
          </div>
          <div class="sidepage">
            <fieldset class="g totals"><legend>Totais do Documento</legend>
              <div class="cells">
                <div><label for="a1">$ dos Itens</label><select id="a1"><option>0,00</option></select></div>
                <div><label for="b1">$ Calculado Itens</label><output id="b1">1.366,85</output></div>
                <div><label for="a2">(-) $ Desconto</label><select id="a2"><option>0,00</option></select></div>
                <div><label for="b2">(+) $ IPI</label><select id="b2"><option>0,00</option></select></div>
                <div><label for="a3">(+) $ Seguro</label><select id="a3"><option>0,00</option></select></div>
                <div><label for="b3">(+) Outras Despesas</label><select id="b3"><option>0,00</option></select></div>
                <div><label for="a4">(+) $ dos Serviços</label><select id="a4"><option>0,00</option></select></div>
                <div><label for="b4">(-) $ Desconto Serv.</label><select id="b4"><option>0,00</option></select></div>
                <div><label for="a5">$ Calculado Serviços</label><output id="a5">0</output></div>
                <div><label for="b5">(N) Outros Custos</label><select id="b5"><option></option></select></div>
                <div><label for="a6">(+) $ Sub. Tributária</label><select id="a6"><option>0,00</option></select></div>
                <div><label for="b6">$ Total Documento</label><select id="b6" class="strong"><option>0,00</option></select></div>
                <div><label for="a7">% ICMS Frete</label><select id="a7" class="cream"><option>0,00%</option></select></div>
                <div><label for="b7">$ Frete</label><select id="b7"><option>0,00</option></select></div>
                <div><label for="a8">$ Frete C.T.R.</label><select id="a8"><option>0,00</option></select></div>
                <div><label for="b8">(+) $ FCP SUB</label><select id="b8"><option>0,00</option></select></div>
                <div><label for="a9">(-) $ Troca</label><select id="a9"><option>0,00</option></select></div>
                <div><label for="b9">(-) $ Bonificação</label><select id="b9"><option>0,00</option></select></div>
              </div>
              <div class="sum"><label for="tot">$ Calc. Total Docto</label><output id="tot">1.366,85</output></div>
              <select class="w165" aria-label="Opção"><option></option></select>
            </fieldset>
          </div>
        </div>
      </div>

      <footer class="status">
        <span class="c keycell"><svg><use href="#key"/></svg></span>
        <span class="c w81 dim bold">Consulta</span>
        <span class="c w107"></span>
        <span class="c name navy bold">0000741657 - O. V. D. IMPORTADORA E DISTRIBUIDORA LTDA</span>
        <span class="c w71 bold">80465</span>
        <span class="c w26 faint">abc</span>
        <span class="c w26">0...9</span>
        <span class="c w28 faint">INS</span>
        <span class="c w101 bold">6 Registros</span>
        <span class="c nav">
          <button aria-label="Primeiro"><svg viewBox="0 0 10 8"><path d="M0 0h2v8H0zM9 0v8L3 4z"/></svg></button>
          <button aria-label="Anterior"><svg viewBox="0 0 10 8"><path d="M8 0v8L1 4z"/></svg></button>
          <button aria-label="Próximo"><svg viewBox="0 0 10 8"><path d="M1 0v8l7-4z"/></svg></button>
          <button aria-label="Último"><svg viewBox="0 0 10 8"><path d="M8 0h2v8H8zM1 0v8l6-4z"/></svg></button>
        </span>
      </footer>
    </section>
  </main>
</div>
</body>
</html>
```
FILE: styles.css
```css
:root {
  --ms: "Liberation Sans", Arial, sans-serif;
  --tahoma: "DejaVu Sans Condensed", "Noto Sans", sans-serif;
  --segoe: "Noto Sans", sans-serif;
  --face: #f0f0f0;
  --line: #0078d7;
  --edge: #a0a0a0;
  --soft: #d9d9d9;
  --arrow: url("data:image/svg+xml,%3Csvg xmlns='http://www.w3.org/2000/svg' width='15' height='15'%3E%3Cpath d='M0 0h15v15H0z' fill='%23f0f0f0'/%3E%3Cpath d='M4 6h7v1h-1v1H9v1H8v1H7V9H6V8H5V7H4z'/%3E%3C/svg%3E");
  --arrow-off: url("data:image/svg+xml,%3Csvg xmlns='http://www.w3.org/2000/svg' width='15' height='15'%3E%3Cpath d='M4 6h7v1h-1v1H9v1H8v1H7V9H6V8H5V7H4z' fill='%23a0a0a0'/%3E%3C/svg%3E");
}
* { box-sizing: border-box; }
body { margin: 0; font: 11px/13px var(--ms); color: #000; background: #fff; }
button { font: inherit; color: inherit; padding: 0; margin: 0; border: 0; background: none; }
.defs { position: absolute; width: 0; height: 0; }
.i { width: 16px; height: 16px; display: block; flex: none; }
h1, h2 { margin: 0; font: 11px/16px var(--segoe); }
.app { display: flex; flex-direction: column; height: 100vh; }

.titlebar { display: flex; align-items: center; height: 24px; padding: 0 10px 2px 2px; flex: none; }
.titlebar h1 { margin: 0 auto 0 5px; }
.win { width: 45px; height: 20px; display: flex; align-items: center; justify-content: center; }
.win svg { width: 10px; height: 10px; fill: none; stroke: #000; }
.win:last-child { margin-right: -7px; }

.bars { background: var(--face); display: flex; padding-bottom: 1px; flex: none; }
.dock { width: 902px; margin-left: 1px; border-right: 1px solid var(--edge); border-bottom: 1px solid var(--edge); }
.menubar { display: flex; gap: 12px; height: 21px; align-items: center; padding-left: 14px; border-bottom: 1px solid var(--edge); font: 11px/15px var(--tahoma); }
.menubar a { color: #000; text-decoration: none; white-space: nowrap; }
.menubar, .t1, .t2 { background: linear-gradient(var(--edge), var(--edge)) 4px 1px / 1px 17px no-repeat; }
.t1, .t2 { background-position: 4px 3px; }
.toolbars { display: flex; height: 25px; }
.tools { display: flex; align-items: center; }
.t1 { padding-left: 10px; width: 402px; border-right: 1px solid var(--edge); }
.t2 { padding-left: 12px; flex: 1; border-right: 1px solid var(--edge); }
.t3 { padding: 0 1px 0 3px; }
.tools button { width: 23px; height: 22px; display: flex; align-items: center; justify-content: center; }
.tools .dd { width: 15px; }
.tools .spaced { margin-left: 3px; }
.dd::before { content: ""; border: 4px solid transparent; border-top-color: #000; border-bottom: 0; }
.sep { width: 9px; height: 18px; background: linear-gradient(var(--edge), var(--edge)) 4px 0 / 1px 100% no-repeat; }

.mdi { flex: 1; min-height: 0; display: flex; padding: 4px 1px 3px 2px; background: linear-gradient(#a0a0a0 0 2px, #696969 2px 4px, #fff 4px); border-left: 1px solid #696969; }
.window { flex: 1; min-width: 0; display: flex; flex-direction: column; border: 1px solid #000; border-top: 1px solid #444; border-radius: 4px 4px 0 0; background: var(--face); box-shadow: inset 1px 0 #b9d1ea, inset -1px 0 #5ac8e8, inset 0 -1px #3cc4ec; padding: 0 2px 1px 1px; }
.wtitle { display: flex; align-items: center; height: 24px; flex: none; padding: 0 2px; background: linear-gradient(#99b4d1, #b9d1ea); margin-right: -1px; }
.wtitle h2 { margin: 0 auto 0 5px; }
.close { width: 32px; height: 18px; border: 1px solid #5a1a1a; border-radius: 2px; background: linear-gradient(#e6a29a, #d4837a 48%, #b83a24 50%, #d2705a); display: grid; place-items: center; box-shadow: inset 0 0 0 1px #f0b8b0; margin-right: 1px; }
.close svg { width: 12px; height: 10px; }

.actions { display: flex; height: 36px; flex: none; background: linear-gradient(#c4f2ff, #8ec8ec 35%, #2a68b4); color: #fff; font: bold 11px/13px var(--tahoma); }
.act { width: 77px; height: 36px; display: flex; flex-direction: column; align-items: center; padding-top: 4px; font: inherit; }
.act span { margin-top: 1px; }
.act:disabled { color: #70757c; }
.act.narrow { width: 60px; }
.act.mid { width: 70px; }
.act.apart { margin-left: 15px; }
.more { width: 14px; display: flex; align-items: center; justify-content: center; padding-top: 4px; }
.more::before { content: ""; border: 4px solid transparent; border-top-color: #fff; border-bottom: 0; }
.open { position: relative; display: flex; background: #c5d2ee; outline: 1px solid #7698d8; outline-offset: -1px; }
.open > .more { border-left: 1px solid #7698d8; }
.menu { position: absolute; z-index: 5; left: 0; top: 36px; width: 241px; padding: 2px 2px 2px 1px; background: var(--face); border: 1px solid var(--edge); box-shadow: 3px 3px 4px rgba(0, 0, 0, .5); font: 11px/16px var(--segoe); color: #000; }
.menu button { display: flex; align-items: center; gap: 12px; width: 100%; height: 22px; padding-left: 4px; white-space: nowrap; }
.menu button:disabled { color: #6d6d6d; }
.menu .hot { position: relative; isolation: isolate; }
.menu .hot::before { content: ""; position: absolute; z-index: -1; inset: -2px auto -4px -2px; width: 179px; background: #f1f060; border: 1px solid #f0b810; box-shadow: inset 0 0 0 1px #f4c820; }
.menu hr { margin: 3px 0 2px 31px; border: 0; border-top: 1px solid #d0d0d0; }

.g { display: flex; align-items: flex-start; min-width: 0; margin: 0; padding: 1px 6px 4px 7px; border: 1px solid var(--line); gap: 4px; }
.g legend { padding: 0 1px; margin-left: -2px; line-height: 13px; height: 13px; white-space: nowrap; }
.g.off { border-color: var(--edge); color: var(--edge); }
.g.slim { padding-right: 3px; }
.g.wide { gap: 5px; }
.low { padding: 2px 4px 3px 6px; }
input, select, textarea { font: 11px/13px var(--ms); color: #000; height: 19px; margin: 0; padding: 0 2px; border: 1px solid var(--edge); border-radius: 0; background: #fff; outline: 0; min-width: 0; }
select { appearance: none; background: #fff var(--arrow) right 1px center no-repeat; padding-right: 16px; text-overflow: clip; }
select:disabled { background: var(--face) var(--arrow-off) right 1px center no-repeat; opacity: 1; }
input:disabled { background: var(--face); }
.find { width: 19px; height: 19px; flex: none; border: 1px solid #adadad; background: #e1e1e1; display: grid; place-items: center; }
.find:disabled { background: #ccc; border-color: #bfbfbf; }
.grow { flex: 1; }

.head { display: flex; flex: none; align-items: flex-start; gap: 2px; padding: 0 3px 0 2px; border-top: 1px solid #fff; border-bottom: 1px solid var(--edge); height: 41px; }
.head .g { padding: 1px 5px 3px 6px; height: 38px; flex-shrink: 0; }
.head input { width: 100%; }
.head .w23 { width: 23px; }
.w88 { width: 88px; } .w37 { width: 37px; } .w57 { width: 57px; } .w92 { width: 92px; } .w105 { width: 105px; } .w114 { width: 115px; }
.head .w37 { padding-left: 3px; padding-right: 5px; }
.head .model { width: 397px; }
.head .w92 { padding-right: 3px; }
.head .w92 select { width: 100%; }
.head .doc { background: linear-gradient(#0078d7, #0078d7) 2px 2px / 62px 13px no-repeat #a6caf0; border: 1px solid var(--line); color: #fff; }
.big { font: bold 14px/16px "Noto Sans", sans-serif; white-space: nowrap; }
.big.arial { font-family: var(--ms); padding: 3px 0 0 2px; }
.navy { color: #000080; } .green { color: #008000; }

.tabs { display: flex; flex: none; align-items: flex-end; height: 21px; margin-bottom: -1px; }
.tabs button { height: 18px; padding: 1px 4px 0 5px; border: 1px solid var(--soft); border-left: 0; background: var(--face); white-space: nowrap; }
.tabs button[aria-selected] { height: 21px; padding: 0 5px 2px 7px; background: #fff; border-bottom: 0; border-left: 0; position: relative; }

.page { flex: 1; min-height: 0; display: flex; background: #fff; border-top: 1px solid var(--soft); border-bottom: 1px solid var(--soft); padding: 4px 1px 2px 5px; }
.form { width: 773px; flex: none; background: var(--face); padding: 0 2px 0 1px; overflow: hidden; border-right: 1px solid var(--edge); }
.row { display: flex; gap: 2px; height: 38px; margin-bottom: 1px; }
.w382 { width: 383px; gap: 5px; } .w457 { width: 458px; } .w118 { width: 118px; } .w511 { width: 511px; padding-right: 3px; } .w376 { width: 376px; } .w125 { width: 125px; }
.w36 { width: 36px; } .w29 { width: 29px; margin-right: 7px; } .w370 { width: 373px; } .w80 { width: 80px; } .w174 { width: 174px; }
.w130 { width: 130px; } .w50 { width: 50px; } .w26 { width: 26px; } .w42 { width: 42px; } .w69 { width: 69px; }
.tight { padding-left: 5px; }
.w382 { padding-right: 1px; }
.key { padding-right: 2px; gap: 2px; }
.key input { margin-top: 2px; }
.row .push { width: 90px; height: 25px; margin-top: -2px; border: 1px solid #fff; border-right-color: #696969; border-bottom-color: #696969; box-shadow: inset -1px -1px var(--edge); background: var(--face); font: bold 12px/14px var(--ms); }
.push::after { content: ""; display: inline-block; margin: 0 0 2px 4px; border: 4px solid transparent; border-top-color: #000; border-bottom: 0; }
.data { display: block; padding: 2px 6px 1px 7px; height: 83px; margin-bottom: 1px; }
.data dl { display: grid; margin: 0; grid-template-columns: 81px 130px 52px 158px 60px 148px 60px 1fr; grid-template-rows: 18px 18px 15px 15px; column-gap: 7px; }
.data dt { font: 11px/14px var(--tahoma); text-align: right; white-space: nowrap; }
.data dd { margin: 0; font: bold 12px/14px var(--ms); color: #000080; white-space: nowrap; }
.rest { grid-column: span 7; } .span3 { grid-column: span 3; }

.lower { display: flex; gap: 2px; padding-top: 1px; }
.notes { width: 378px; margin-left: -1px; }
.notebody { display: flex; align-items: flex-start; height: 160px; padding: 4px 2px 0 4px; background: #fff; border: 1px solid var(--soft); border-bottom: 0; }
.notebody textarea { flex: 1; height: 156px; resize: none; border-right: 0; }
.oldbar { width: 18px; height: 156px; border: 1px solid var(--edge); border-left: 0; background: repeating-conic-gradient(#fff 0 25%, #ececec 0 50%) 0 0 / 2px 2px; }
.oldbar button { width: 17px; height: 17px; display: grid; place-items: center; background: var(--face); border: 1px solid var(--edge); border-top: 0; }
.oldbar button::before { content: ""; border: 5px solid transparent; border-bottom-color: var(--edge); border-top: 0; }
.count { width: 27px; height: 19px; margin-left: 2px; padding: 2px; border: 1px solid var(--edge); background: var(--face); text-align: right; font-weight: bold; color: #000080; }
.extras { flex: 1; min-width: 0; }
.panel { display: flex; gap: 2px; height: 41px; padding: 0 1px 1px 2px; border-top: 1px solid #fff; border-bottom: 1px solid var(--edge); }
.file { display: flex; flex: 1; border: 1px solid var(--edge); background: #fff; height: 19px; gap: 4px; padding-right: 2px; }
.file input { border: 0; flex: 1; height: 17px; }
.file button { background: var(--face); width: 18px; height: 17px; overflow: hidden; }

.scroll { width: 16px; flex: none; display: flex; flex-direction: column; align-items: center; background: var(--face); }
.scroll button { width: 16px; height: 17px; display: grid; place-items: center; }
.scroll svg { width: 10px; height: 6px; fill: none; stroke: #505050; stroke-width: 2; }
.thumb { width: 15px; height: 362px; background: #cdcdcd; margin-bottom: auto; }

.side { flex: 1; min-width: 0; display: flex; flex-direction: column; background: var(--face); margin: -4px 0 0 1px; padding: 4px 2px 1px 0; }
.side .tabs button:not([aria-selected]) { padding: 1px 4px 0 4px; }
.side .tabs { margin-left: 1px; }
.sidepage { flex: 1; display: flex; border: 1px solid var(--soft); background: #fff; padding: 3px 5px 3px 3px; }
.totals { flex: 1; display: block; padding: 5px 6px 0; background: var(--face); }
.totals legend { margin-left: -1px; }
.cells { display: grid; grid-template-columns: 95px 95px; column-gap: 10px; grid-auto-rows: 37px; }
.cells label, .sum label { display: block; padding-left: 2px; white-space: nowrap; height: 13px; }
.cells div:nth-child(odd) label { overflow: hidden; margin-right: -8px; }
.cells select { width: 95px; display: block; padding-right: 18px; text-align: right; text-align-last: right; }
.cells output, .sum output { display: block; text-align: right; padding: 3px 2px 0 0; font: bold 11px/14px var(--tahoma); color: #008000; }
.cells .strong { font-weight: bold; font-size: 12px; }
.cells .cream { background-color: #fffbf0; }
.sum { width: 97px; margin: 5px 0 7px; padding-left: 2px; }
.w165 { width: 165px; margin-left: 3px; }

.status { display: flex; flex: none; gap: 2px; height: 26px; padding: 3px 1px 0 0; }
.c { height: 22px; text-align: center; white-space: nowrap; border: 1px solid #fff; border-top-color: var(--edge); border-left-color: var(--edge); line-height: 20px; overflow: hidden; flex: none; }
.keycell { width: 29px; border-color: #fff var(--edge) var(--edge) #fff; display: grid; place-items: center; }
.keycell svg { width: 18px; height: 10px; }
.w81 { width: 82px; } .w107 { width: 107px; } .w71 { width: 72px; } .status .w26 { width: 27px; } .w28 { width: 29px; }
.status .w101 { width: 102px; }
.bold { font: bold 12px/20px var(--ms); }
.dim { color: #808080; } .faint { color: #b0b0b0; }
.name { flex: 1 1 442px; }
.nav { flex: 1 1 420px; display: flex; justify-content: space-around; }
.nav button { width: 20px; display: grid; place-items: center; }
.nav svg { width: 10px; height: 8px; }
```
